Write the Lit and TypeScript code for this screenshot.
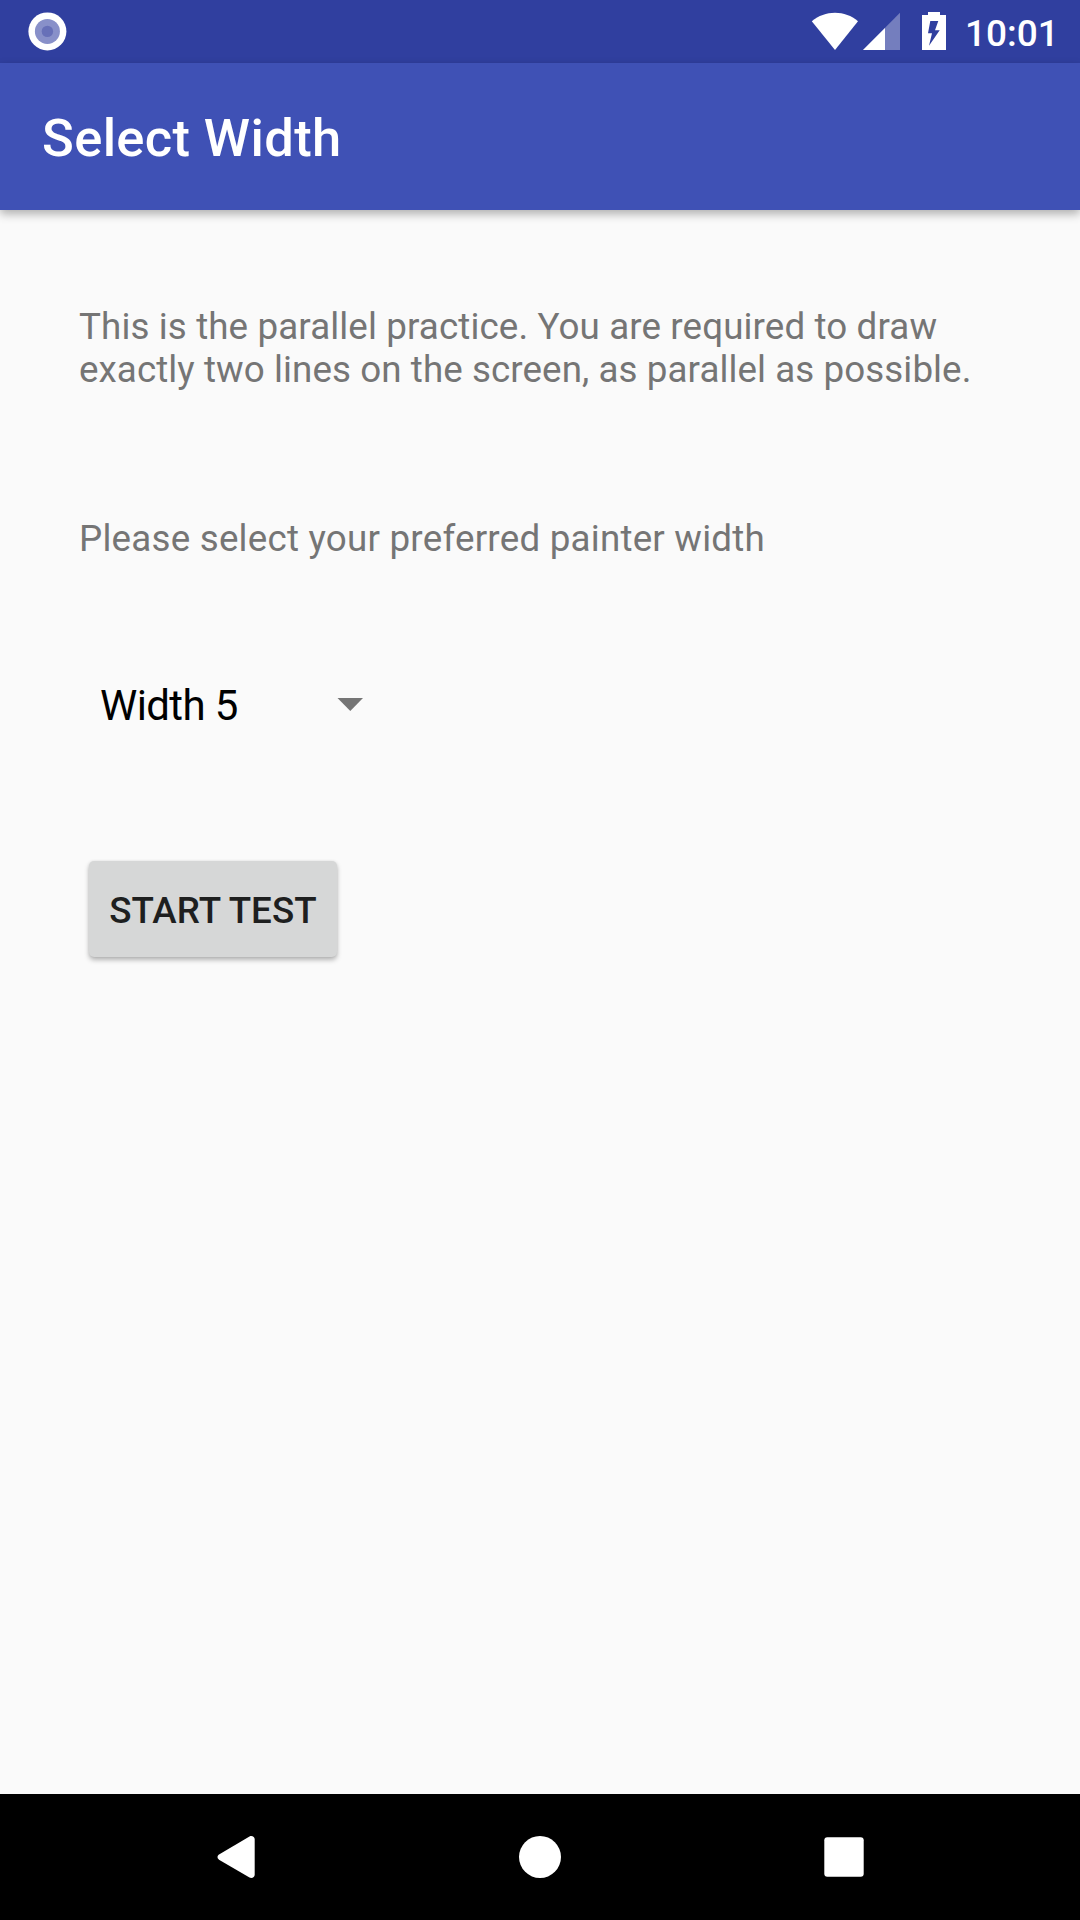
import { LitElement, html, css } from "lit";
import { customElement, property } from "lit/decorators.js";

@customElement("status-bar")
class StatusBar extends LitElement {
  @property() time = "";

  static styles = css`
    :host {
      display: flex;
      align-items: flex-start;
      height: 63px;
      box-sizing: border-box;
      padding: 0 26px 0 28px;
      background: #303f9f;
      color: #fff;
    }
    svg {
      display: block;
      flex: none;
    }
    .notice {
      margin-top: 12px;
      margin-right: auto;
    }
    .wifi {
      margin-top: 12px;
      margin-right: 4px;
    }
    .signal {
      margin-top: 12px;
      margin-right: 22px;
    }
    .battery {
      margin-top: 12px;
      margin-right: 19px;
    }
    .clock {
      width: 89px;
      margin-top: 12px;
      font-size: 37px;
      line-height: 43px;
      font-weight: 500;
      white-space: nowrap;
    }
  `;

  render() {
    return html`
      <svg class="notice" width="39" height="39" viewBox="0 0 39 39">
        <circle cx="19.4" cy="19.4" r="19" fill="#fff" />
        <circle cx="19.4" cy="19.4" r="12.5" fill="#8890c9" />
        <circle cx="19.4" cy="19.4" r="5.7" fill="#6770b8" />
      </svg>
      <svg class="wifi" width="48" height="38" viewBox="0 0 48 38">
        <path d="M25 38 1.8 9.3C8.500 3.700 16.500 .8 25 .8S41.500 3.700 48 9.300Z" fill="#fff" />
      </svg>
      <svg class="signal" width="38" height="38" viewBox="0 0 38 38">
        <path d="M1 38 38 .8V38Z" fill="#fff" fill-opacity=".33" />
        <path d="M1 38 23 16V38Z" fill="#fff" />
      </svg>
      <svg class="battery" width="24" height="38" viewBox="0 0 24 38">
        <path
          fill="#fff"
          fill-rule="evenodd"
          d="M6 0H18V3H24V38H0V3H6ZM8.300 9 6 21.300H10L7 33.700 17.700 18.300H13L16.300 9Z"
        />
      </svg>
      <div class="clock">${this.time}</div>
    `;
  }
}

@customElement("width-spinner")
class WidthSpinner extends LitElement {
  @property() value = "";

  static styles = css`
    :host {
      display: flex;
      align-items: center;
      justify-content: space-between;
      width: 263px;
      height: 49px;
      font-size: 42px;
      line-height: 49px;
      letter-spacing: -0.6px;
      color: #000;
    }
    svg {
      display: block;
      margin-bottom: 2px;
    }
  `;

  render() {
    return html`
      <span>${this.value}</span>
      <svg width="26" height="13" viewBox="0 0 26 13">
        <path d="M.5 0H26L13.300 13Z" fill="#757575" />
      </svg>
    `;
  }
}

@customElement("nav-bar")
class NavBar extends LitElement {
  static styles = css`
    :host {
      display: flex;
      align-items: center;
      height: 126px;
      background: #000;
    }
    svg {
      display: block;
      flex: none;
    }
    .back {
      margin-left: 217px;
    }
    .home {
      margin-left: 264px;
    }
    .recent {
      margin-left: 263px;
    }
  `;

  render() {
    return html`
      <svg class="back" width="38" height="42" viewBox="0 0 38 42">
        <path
          d="M2 18.500 32.500 .5C35 -.7 37.700 .8 37.700 3.500V38.500C37.700 41.200 35 42.700 32.500 41.500L2 23.700C0 22.500 0 19.700 2 18.500Z"
          fill="#fff"
        />
      </svg>
      <svg class="home" width="42" height="42" viewBox="0 0 42 42">
        <circle cx="21" cy="21" r="21" fill="#fff" />
      </svg>
      <svg class="recent" width="40" height="40" viewBox="0 0 40 40">
        <rect x=".3" y=".3" width="39.400" height="39.400" rx="3" fill="#fff" />
      </svg>
    `;
  }
}

@customElement("app-root")
class AppRoot extends LitElement {
  static styles = css`
    :host {
      display: flex;
      flex-direction: column;
      width: 1080px;
      height: 1920px;
      overflow: hidden;
      background: #fafafa;
      font-family: Roboto, "Liberation Sans", sans-serif;
    }
    .toolbar {
      display: flex;
      align-items: center;
      flex: none;
      height: 147px;
      box-sizing: border-box;
      padding: 3px 0 0 42px;
      background: #3f51b5;
      box-shadow: 0 4px 9px rgba(0, 0, 0, 0.3);
    }
    .title {
      margin: 0;
      font-size: 52.5px;
      line-height: 62px;
      font-weight: 500;
      letter-spacing: 0.36px;
      color: #fff;
    }
    .content {
      display: flex;
      flex-direction: column;
      align-items: flex-start;
      flex: 1;
      padding: 95px 79px 0;
    }
    .text {
      margin: 0;
      font-size: 36.75px;
      line-height: 43px;
      letter-spacing: 0.075px;
      white-space: nowrap;
      color: #757575;
    }
    .first {
      letter-spacing: 0.115px;
    }
    .prompt {
      margin-top: 126px;
      letter-spacing: 0.22px;
    }
    .spinner {
      margin-top: 121px;
      margin-left: 21px;
    }
    .start {
      width: 248px;
      height: 96px;
      margin: 131px 0 0 10px;
      padding: 3px 0 0;
      border: 0;
      border-radius: 5px;
      background: #d6d7d7;
      box-shadow: 0 3px 5px rgba(0, 0, 0, 0.28), 0 0 3px rgba(0, 0, 0, 0.08);
      font-family: inherit;
      font-size: 36.75px;
      line-height: 43px;
      font-weight: 500;
      letter-spacing: 0.05px;
      color: #1e1f1f;
      white-space: nowrap;
    }
  `;

  render() {
    return html`
      <status-bar time="10:01"></status-bar>
      <header class="toolbar"><h1 class="title">Select Width</h1></header>
      <main class="content">
        <p class="text">
          <span class="first">This is the parallel practice. You are required to draw</span><br />exactly two lines on
          the screen, as parallel as possible.
        </p>
        <p class="text prompt">Please select your preferred painter width</p>
        <width-spinner class="spinner" value="Width 5"></width-spinner>
        <button class="start">START TEST</button>
      </main>
      <nav-bar></nav-bar>
    `;
  }
}
